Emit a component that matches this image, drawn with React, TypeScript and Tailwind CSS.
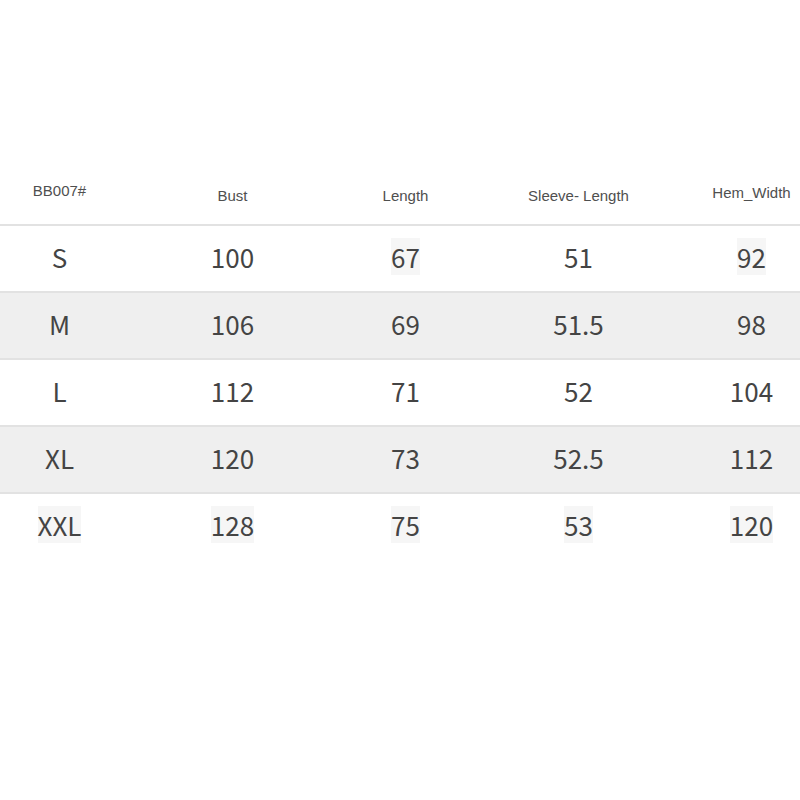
const headers = ["BB007#", "Bust", "Length", "Sleeve- Length", "Hem_Width"];

const rows: { cells: string[]; shaded: boolean; boxed: number[] }[] = [
  { cells: ["S", "100", "67", "51", "92"], shaded: false, boxed: [2, 4] },
  { cells: ["M", "106", "69", "51.5", "98"], shaded: true, boxed: [] },
  { cells: ["L", "112", "71", "52", "104"], shaded: false, boxed: [] },
  { cells: ["XL", "120", "73", "52.5", "112"], shaded: true, boxed: [] },
  { cells: ["XXL", "128", "75", "53", "120"], shaded: false, boxed: [0, 1, 2, 3, 4] },
];

// small vertical nudges so the header labels sit like the photo
const headerNudge = ["-translate-y-[5px]", "", "", "", "-translate-y-[3px]"];

export default function App() {
  return (
    <div className="h-[800px] w-[800px] overflow-hidden bg-white pt-[172px] font-['Liberation_Sans',Arial,sans-serif]">
      <div className="ml-[-27px] w-[865px]">
        <div className="grid h-[52px] grid-cols-5 items-center pb-[4px] text-[15px] text-[#4f4f4f]">
          {headers.map((h, i) => (
            <div key={h} className={`text-center ${headerNudge[i]}`}>
              {h}
            </div>
          ))}
        </div>

        {rows.map((r) => (
          <div
            key={r.cells[0]}
            className={`grid h-[67px] grid-cols-5 items-center border-t-2 border-[#e2e2e2] pb-[3px] font-['Noto_Sans_CJK_SC','Noto_Sans',sans-serif] text-[26px] font-normal text-[#444] ${
              r.shaded ? "bg-[#efefef]" : "bg-white"
            }`}
          >
            {r.cells.map((c, i) => (
              <div key={i} className="text-center leading-none">
                <span className={r.boxed.includes(i) ? "bg-[#f6f6f6]" : ""}>{c}</span>
              </div>
            ))}
          </div>
        ))}
      </div>
    </div>
  );
}
